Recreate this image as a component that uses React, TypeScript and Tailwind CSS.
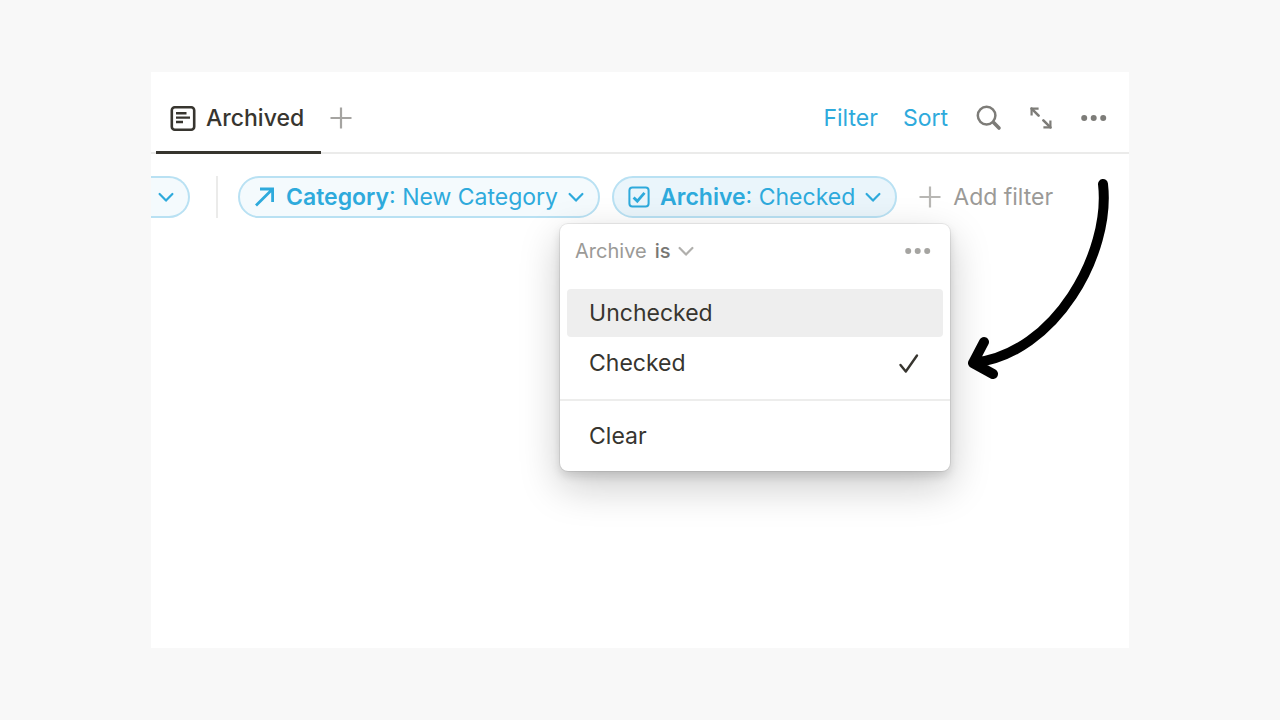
import type { ReactNode } from "react";

function Chevron({ className = "" }: { className?: string }) {
    return (
        <svg className={`h-4 w-4 shrink-0 ${className}`} viewBox="0 0 16 16" fill="none" stroke="currentColor" strokeWidth={2.2} strokeLinecap="round" strokeLinejoin="round">
            <path d="M1.6 5l6.4 6.6L14.4 5" />
        </svg>
    );
}

function Plus({ className = "" }: { className?: string }) {
    return (
        <svg className={`h-[22px] w-[22px] shrink-0 ${className}`} viewBox="0 0 22 22" fill="none" stroke="currentColor" strokeWidth={2.2}>
            <path d="M11 .5v21M.5 11h21" />
        </svg>
    );
}

function Dots({ className = "" }: { className?: string }) {
    return (
        <svg className={`w-[26px] shrink-0 ${className}`} viewBox="0 0 26 8" fill="currentColor">
            <circle cx="3.2" cy="4" r="3" />
            <circle cx="12.7" cy="4" r="3" />
            <circle cx="22.2" cy="4" r="3" />
        </svg>
    );
}

function FilterChip({ icon, name, value, className = "" }: { icon: ReactNode; name: string; value: string; className?: string }) {
    return (
        <button className={`flex h-[42px] items-center rounded-full border-2 border-[#b9e1f3] px-3.5 text-[#2eaadc] ${className}`}>
            {icon}
            <span className="mx-2.5">
                <span className="font-semibold">{name}</span>: {value}
            </span>
            <Chevron />
        </button>
    );
}

function FilterMenu() {
    return (
        <div className="absolute -left-[52px] top-12 z-10 w-[390px] rounded-lg bg-white text-[#37352f] shadow-[0_0_0_1px_rgba(15,15,15,0.07),0_5px_10px_rgba(15,15,15,0.13),0_15px_40px_rgba(15,15,15,0.22)]">
            <div className="flex h-[54px] items-center justify-between pl-[15px] pr-[19px] text-xl">
                <button className="flex items-center text-[#9b9a97]">
                    Archive
                    <span className="mx-2 font-medium text-[#787774]">is</span>
                    <Chevron className="text-[#b0afac]" />
                </button>
                <button aria-label="Filter options" className="text-[#a5a4a1]">
                    <Dots />
                </button>
            </div>
            <div className="px-[7px] pb-3 pt-[11px]">
                <button className="flex h-12 w-full items-center rounded-sm bg-[#eeeeee] px-[22px]">Unchecked</button>
                <button className="mt-0.5 flex h-12 w-full items-center justify-between px-[22px]">
                    Checked
                    <svg className="h-6 w-6" viewBox="0 0 24 24" fill="none" stroke="currentColor" strokeWidth={2.4} strokeLinecap="round" strokeLinejoin="round">
                        <path d="M3.5 14l5.3 6.5L20 4.5" />
                    </svg>
                </button>
            </div>
            <div className="border-t-2 border-[#ededec] px-[7px] py-[11px]">
                <button className="flex h-12 w-full items-center px-[22px]">Clear</button>
            </div>
        </div>
    );
}

export default function App() {
    return (
        <div className="min-h-screen bg-[#f8f8f8] py-[72px] font-['Inter','Liberation_Sans',sans-serif] text-[23px]">
            <div className="relative mx-auto min-h-[576px] w-full max-w-[978px] bg-white">
                <header className="flex h-[82px] items-stretch justify-between border-b-2 border-[#ebebea] pl-[5px] pr-[22px]">
                    <div className="flex items-stretch">
                        <button className="-mb-0.5 flex items-center border-b-[3px] border-[#37352f] pl-3.5 pr-[17px] pt-3.5 font-medium text-[#37352f]">
                            <svg className="mr-2.5 h-[26px] w-[26px]" viewBox="0 0 26 26" fill="none" stroke="currentColor" strokeWidth={2.6}>
                                <rect x="1.8" y="1.3" width="22.4" height="22.4" rx="3" />
                                <path d="M6 7.2h10.5M6 11.6h14M6 16h7" strokeWidth={2.4} />
                            </svg>
                            Archived
                        </button>
                        <button aria-label="Add view" className="ml-[9px] pt-3 text-[#a5a4a1]">
                            <Plus />
                        </button>
                    </div>
                    <div className="flex items-center pt-3 text-[#7d7c78]">
                        <button className="text-[#2eaadc]">Filter</button>
                        <button className="ml-[25px] text-[#2eaadc]">Sort</button>
                        <button aria-label="Search" className="ml-7">
                            <svg className="h-[26px] w-[26px]" viewBox="0 0 26 26" fill="none" stroke="currentColor" strokeLinecap="round">
                                <circle cx="10.6" cy="10.6" r="8.8" strokeWidth={2.5} />
                                <path d="M17.6 17.6l5.4 5.4" strokeWidth={3.6} />
                            </svg>
                        </button>
                        <button aria-label="Expand" className="ml-7">
                            <svg className="h-[22px] w-[22px]" viewBox="0 0 22 22" fill="none" stroke="currentColor" strokeWidth={2.2}>
                                <path d="M1.6 8.6V1.6h7M20.4 13.4v7h-7" />
                                <path d="M1.6 1.6l7 7M20.4 20.4l-7-7" strokeWidth={2.6} strokeLinecap="round" />
                            </svg>
                        </button>
                        <button aria-label="More" className="ml-[29px]">
                            <Dots />
                        </button>
                    </div>
                </header>

                <div className="flex items-center pt-[22px]">
                    <button aria-label="Open filter" className="flex h-[42px] w-[39px] items-center rounded-r-full border-2 border-l-0 border-[#b9e1f3] bg-[#f4fafd] pl-[7px] text-[#2eaadc]">
                        <Chevron />
                    </button>
                    <div className="ml-[26px] mr-5 h-[42px] w-0.5 bg-[#ebebea]" />
                    <FilterChip
                        className="bg-[#f4fafd]"
                        name="Category"
                        value="New Category"
                        icon={
                            <svg className="h-[22px] w-[22px]" viewBox="0 0 22 22" fill="none" stroke="currentColor" strokeWidth={2.8}>
                                <path d="M2 19.5L18.6 3M6 3h12.6v13" />
                            </svg>
                        }
                    />
                    <div className="relative ml-3">
                        <FilterChip
                            className="bg-[#eaf5fb]"
                            name="Archive"
                            value="Checked"
                            icon={
                                <svg className="h-[22px] w-[22px]" viewBox="0 0 22 22" fill="none" stroke="currentColor" strokeWidth={2}>
                                    <rect x="1.4" y="1.4" width="19.2" height="19.2" rx="3" />
                                    <path d="M5.6 11.4l3.7 3.7 7.2-8.2" strokeWidth={2.8} />
                                </svg>
                            }
                        />
                        <FilterMenu />
                    </div>
                    <button className="ml-[22px] flex items-center text-[#9b9a97]">
                        <Plus className="mr-3 text-[#b8b7b4]" />
                        Add filter
                    </button>
                </div>

                <svg className="absolute right-[19px] top-[106px] z-20 h-[204px] w-[144px]" viewBox="0 0 144 204" fill="none" stroke="#000" strokeWidth={10} strokeLinecap="round" strokeLinejoin="round">
                    <path d="M137 6C145 74 90 176 7 185M18 164L7 185l20 11" />
                </svg>
            </div>
        </div>
    );
}
